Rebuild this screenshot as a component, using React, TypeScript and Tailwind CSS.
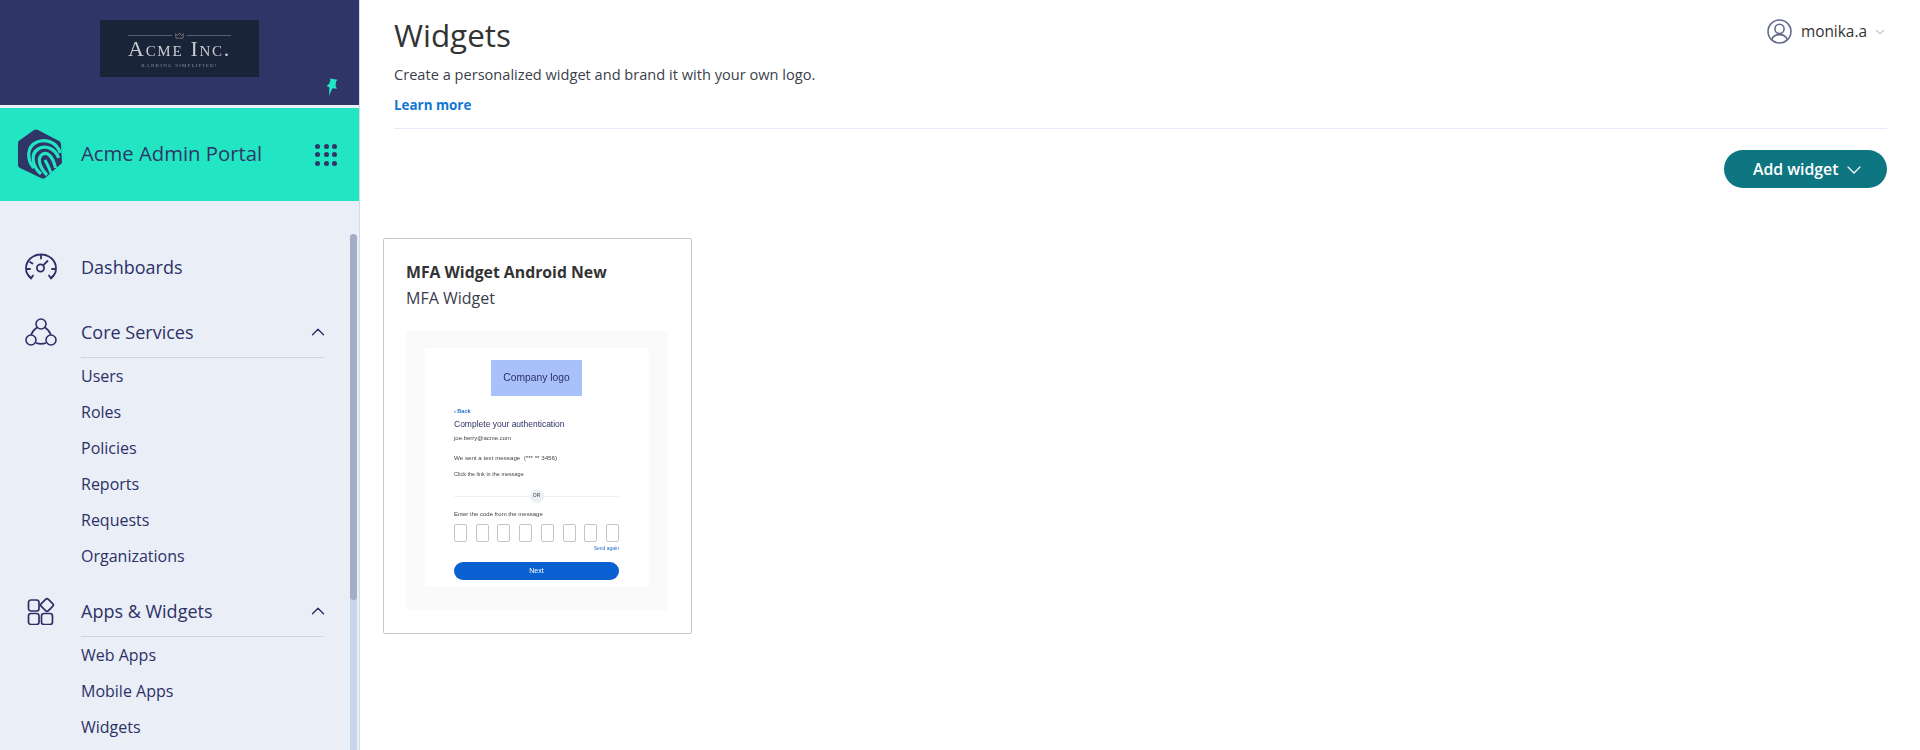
import { ChevronDown, ChevronUp } from 'lucide-react';

const coreItems = ['Users', 'Roles', 'Policies', 'Reports', 'Requests', 'Organizations'];
const appItems = ['Web Apps', 'Mobile Apps', 'Widgets'];

const PinIcon = () => (
  <svg viewBox="0 0 12 18" className="h-[18px] w-[12px]" fill="#22e6c3">
    <path d="M4 0.5 L11.6 1.8 L10 3.6 L9.6 8 L11 10.8 L6.4 10.2 L3 17.8 L3.4 9.4 L0.6 8 L3 6 L4.4 2.6 Z" />
  </svg>
);

const CrownIcon = () => (
  <svg viewBox="0 0 10 8" className="h-[7px] w-[9px]" fill="none" stroke="#77766f" strokeWidth="1">
    <path d="M1 7 H9 L9.5 2 L7 4 L5 1 L3 4 L0.5 2 Z" />
  </svg>
);

const FingerprintLogo = () => (
  <svg viewBox="0 0 44 50" className="h-[50px] w-[44px]" fill="none">
    <path d="M16 1 Q18 0 20 1 L41 12 Q43 13 43 15 L44 34 L27 49 Q25 50 23 49 L2 39 Q0 38 0 36 L0 14 Q0 12 2 11 Z" fill="#2f3566" />
    <path d="M15.7 39 C9 31 8 18 19 13 C29 9 39 14 42.3 24" stroke="#22e6c3" strokeWidth="3.2" />
    <path d="M23 45 C15 38 11 25 21 19.5 C29 16 37 20 40.7 29" stroke="#22e6c3" strokeWidth="3.2" />
    <path d="M29 46 C23 40 18 30 24 25.5 C30 22 35 28 37.5 39" stroke="#22e6c3" strokeWidth="3.2" />
    <path d="M33 44 C31 38 28 33 27 31" stroke="#22e6c3" strokeWidth="3" />
  </svg>
);

const GridDots = () => (
  <div className="grid grid-cols-3 gap-[3.5px]">
    {Array.from({ length: 9 }).map((_, i) => (
      <span key={i} className="h-[5px] w-[5px] rounded-full bg-[#2f3566]" />
    ))}
  </div>
);

const DashboardIcon = () => (
  <svg viewBox="0 0 32 28" className="h-[28px] w-[32px]" fill="none" stroke="#2d3166" strokeWidth="1.8" strokeLinecap="round" strokeLinejoin="round">
    <path d="M6 25 C2.5 22.5 1 19 1 15.5 C1 7.5 7.5 1.5 16 1.5 C24.5 1.5 31 7.5 31 15.5 C31 19 29.5 22.5 26 25" />
    <path d="M3.5 22.5 L6 25.5 L8 22.5 M24 22.5 L26 25.5 L28.5 22.5" />
    <circle cx="15.5" cy="15" r="3.6" />
    <path d="M18.2 12.4 L22.5 8 M16 2 V5.5 M5 9 L7.5 10.5 M2 16 H5 M27 16 H30" />
  </svg>
);

const CoreIcon = () => (
  <svg viewBox="0 0 32 28" className="h-[28px] w-[32px]" fill="none" stroke="#2d3166" strokeWidth="1.6">
    <circle cx="16" cy="6" r="5" />
    <circle cx="6" cy="22" r="5" />
    <circle cx="26" cy="22" r="5" />
    <path d="M12 9.5 C9 11.5 7 14 6 17 M20 9.5 C23 11.5 25 14 26 17 M11 25 C14 26 18 26 21 25" />
  </svg>
);

const AppsIcon = () => (
  <svg viewBox="0 0 28 28" className="h-[28px] w-[28px]" fill="none" stroke="#2d3166" strokeWidth="1.7">
    <rect x="1.5" y="3" width="10.5" height="11" rx="2.5" />
    <rect x="1.5" y="16.5" width="10.5" height="11" rx="2.5" />
    <rect x="14.5" y="16.5" width="11" height="11" rx="2.5" />
    <rect x="15" y="3" width="10" height="10" rx="2" transform="rotate(45 20 8)" />
  </svg>
);

const UserIcon = () => (
  <svg viewBox="0 0 24 24" className="h-[25px] w-[25px]" fill="none" stroke="#62698a" strokeWidth="1.5">
    <circle cx="12" cy="12" r="11" />
    <circle cx="12" cy="9.5" r="4.4" />
    <path d="M4.5 20 C5.5 16.5 8 15 12 15 C16 15 18.5 16.5 19.5 20" />
  </svg>
);

const NavSection = ({ icon, label, items }: { icon: React.ReactNode; label: string; items: string[] }) => (
  <div className="mb-[19px]">
    <div className="flex h-[44px] items-start">
      <div className="flex h-[36px] w-[81px] shrink-0 items-center justify-center pl-[1px]">{icon}</div>
      <div className="flex h-[44px] flex-1 items-start justify-between border-b border-[#cdd5e8] pt-[5px]">
        <span className="text-[18px] leading-[26px]">{label}</span>
        <ChevronUp className="mt-[2px] -mr-[5px] h-[22px] w-[22px]" strokeWidth={1.5} />
      </div>
    </div>
    <ul className="ml-[81px]">
      {items.map((item) => (
        <li key={item} className="flex h-[36px] items-center text-[16px]">
          {item}
        </li>
      ))}
    </ul>
  </div>
);

const WidgetPreview = () => (
  <div className="mt-[20px] bg-[#fafafa] pt-[17px] pr-[19px] pb-[23px] pl-[19px]">
    <div className="flex h-[239px] flex-col bg-white pt-[12px] pr-[30px] pl-[29px] font-['Liberation_Sans',sans-serif] text-[#444] blur-[0.35px]">
      <div className="mx-auto flex h-[36px] w-[91px] items-center justify-center bg-[#a8c1fa] text-[10.3px] text-[#2d3166]">
        Company logo
      </div>
      <div className="mt-[11px] h-[8px] text-[5.5px] leading-[8px] font-bold text-[#1b6fc9]">‹ Back</div>
      <div className="mt-[2px] h-[14px] text-[8.5px] leading-[14px] text-[#2d3166]">Complete your authentication</div>
      <div className="h-[14px] text-[6px] leading-[14px]">joe.berry@acme.com</div>
      <div className="mt-[7px] h-[12px] text-[6.2px] leading-[12px]">We sent a text message &nbsp;(*** ** 3456)</div>
      <div className="mt-[4px] h-[12px] text-[5.5px] leading-[12px]">Click the link in the message</div>
      <div className="mt-[9px] flex h-[14px] items-center">
        <div className="h-px flex-1 bg-[#f0f1f5]" />
        <div className="flex h-[14px] w-[14px] items-center justify-center rounded-full bg-[#edf0f6] text-[5px]">OR</div>
        <div className="h-px flex-1 bg-[#f0f1f5]" />
      </div>
      <div className="mt-[5px] h-[12px] text-[6px] leading-[12px]">Enter the code from the message</div>
      <div className="mt-[4px] flex justify-between">
        {Array.from({ length: 8 }).map((_, i) => (
          <div key={i} className="h-[18px] w-[13px] rounded-[2px] border border-[#c4c4c4]" />
        ))}
      </div>
      <div className="mt-[2px] h-[9px] text-right text-[5px] leading-[9px] text-[#1b6fc9]">Send again</div>
      <div className="mt-[9px] flex h-[18px] items-center justify-center rounded-full bg-[#0a60d0] text-[7px] text-white">Next</div>
    </div>
  </div>
);

export default function App() {
  return (
    <div className="flex h-[750px] overflow-hidden bg-white font-['Open_Sans',sans-serif] text-[#2d3166]">
      <aside className="flex w-[360px] shrink-0 flex-col border-r border-[#d5dae5] bg-[#e9eef7]">
        <div className="relative flex h-[105px] justify-center bg-[#2f3566] pt-[20px]">
          <div className="flex h-[57px] w-[159px] flex-col items-center bg-[#1a2438] pt-[12px] font-['Liberation_Serif',serif] text-[#c9ccd2] blur-[0.3px]">
            <div className="flex h-[7px] items-center gap-[3px]">
              <span className="h-px w-[44px] bg-[#5a6070]" />
              <CrownIcon />
              <span className="h-px w-[44px] bg-[#5a6070]" />
            </div>
            <div className="text-[22px] leading-[20px] tracking-[1.7px] [font-variant:small-caps]">Acme Inc.</div>
            <div className="mt-[3px] text-[5px] leading-[7px] tracking-[1.2px] text-[#8b8f98]">BANKING SIMPLIFIED!</div>
          </div>
          <div className="absolute top-[78px] left-[326px]">
            <PinIcon />
          </div>
        </div>
        <div className="mt-[3px] flex h-[93px] items-center justify-between bg-[#22e6c3] pr-[22px] pl-[18px]">
          <div className="flex items-center gap-[19px] pb-[2px]">
            <FingerprintLogo />
            <span className="text-[20.3px] text-[#2f3566]">Acme Admin Portal</span>
          </div>
          <GridDots />
        </div>
        <div className="flex min-h-0 flex-1">
          <nav className="min-w-0 flex-1 overflow-hidden pt-[48px] pr-[26px]">
            <div className="mb-[29px] flex h-[36px] items-center">
              <div className="flex w-[81px] shrink-0 justify-center">
                <DashboardIcon />
              </div>
              <span className="text-[18px]">Dashboards</span>
            </div>
            <NavSection icon={<CoreIcon />} label="Core Services" items={coreItems} />
            <NavSection icon={<AppsIcon />} label="Apps & Widgets" items={appItems} />
          </nav>
          <div className="mt-[33px] mr-[2px] w-[7px] rounded-t-full bg-[#c8d4e8]">
            <div className="h-[366px] rounded-full bg-[#a3aec4]" />
          </div>
        </div>
      </aside>

      <main className="min-w-0 flex-1 pr-[33px] pl-[23px]">
        <header className="ml-[11px] border-b border-[#e4ebf8]">
          <div className="flex items-start justify-between">
            <h1 className="pt-[13px] text-[31.4px] leading-[44px] text-[#333]">Widgets</h1>
            <div className="flex items-center pt-[19px]">
              <UserIcon />
              <span className="ml-[9px] text-[15.4px] font-medium text-[#333]">monika.a</span>
              <ChevronDown className="ml-[6px] h-[14px] w-[14px] text-[#8a8f9c]" strokeWidth={1.5} />
            </div>
          </div>
          <p className="mt-[7px] text-[14.6px] leading-[20px] text-[#3c3f4a]">Create a personalized widget and brand it with your own logo.</p>
          <a className="mt-[11px] mb-[13px] block text-[13.4px] leading-[20px] font-bold text-[#1176d4]">Learn more</a>
        </header>
        <div className="mt-[21px] flex justify-end">
          <button className="flex h-[38px] w-[163px] items-center rounded-full bg-[#0e7681] pt-[1px] pl-[29px] text-[15.8px] font-semibold text-white">
            Add widget
            <ChevronDown className="ml-[4px] h-[24px] w-[24px]" strokeWidth={1.2} />
          </button>
        </div>
        <article className="mt-[50px] w-[309px] rounded-[2px] border border-[#c9c9c9] pt-[20px] pr-[23px] pb-[23px] pl-[22px]">
          <h2 className="text-[15.8px] leading-[26px] font-bold text-[#333]">MFA Widget Android New</h2>
          <p className="text-[16px] leading-[26px] text-[#3a3d4d]">MFA Widget</p>
          <WidgetPreview />
        </article>
      </main>
    </div>
  );
}
